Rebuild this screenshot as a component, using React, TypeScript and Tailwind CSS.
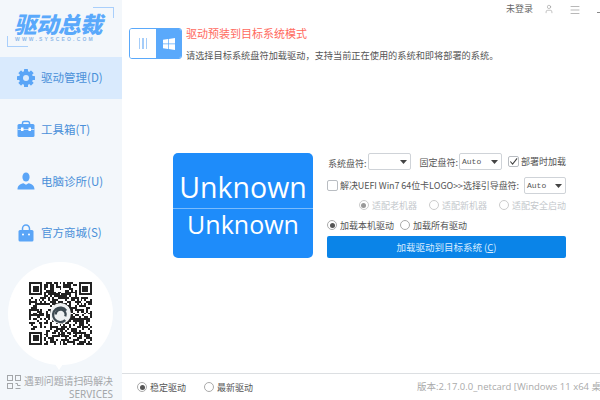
import { Menu, User } from "lucide-react";
import type { ReactNode } from "react";

const FONT = "font-['Noto_Sans_CJK_SC','Noto_Sans',sans-serif]";

const NAV_ITEMS = [
  { label: "驱动管理(D)", icon: "gear", active: true },
  { label: "工具箱(T)", icon: "case" },
  { label: "电脑诊所(U)", icon: "person" },
  { label: "官方商城(S)", icon: "bag" },
];

function NavIcon({ name }: { name: string }) {
  if (name === "gear") {
    return (
      <svg viewBox="0 0 18 18" className="h-[18px] w-[18px]">
        <circle cx="9" cy="9" r="5" fill="none" stroke="#5aa5f7" strokeWidth="4" />
        {[0, 45, 90, 135].map((deg) => (
          <rect key={deg} x="7" y="0" width="4" height="18" rx="0.6" fill="#5aa5f7" transform={`rotate(${deg} 9 9)`} />
        ))}
        <circle cx="9" cy="9" r="3" fill="#d9eafd" />
      </svg>
    );
  }
  if (name === "case") {
    return (
      <svg viewBox="0 0 18 18" className="h-[18px] w-[18px]">
        <path d="M5.5 5V3A1.5 1.5 0 0 1 7 1.5h4A1.5 1.5 0 0 1 12.5 3v2" fill="none" stroke="#5aa5f7" strokeWidth="1.5" />
        <rect x="0.5" y="4" width="17" height="13" rx="1.5" fill="#5aa5f7" />
        <rect x="0.5" y="9" width="17" height="1" fill="#c4def9" />
        <rect x="4" y="7.5" width="2.5" height="3.5" fill="#fff" />
        <rect x="11.5" y="7.5" width="2.5" height="3.5" fill="#fff" />
      </svg>
    );
  }
  if (name === "person") {
    return (
      <svg viewBox="0 0 18 18" className="h-[18px] w-[18px] fill-[#5aa5f7]">
        <ellipse cx="9" cy="5" rx="3.6" ry="4.6" />
        <path d="M0.5 17.5c0-4 2.5-5.5 6-6.3l2.5 1.6 2.5-1.6c3.5 0.8 6 2.3 6 6.3z" />
      </svg>
    );
  }
  return (
    <svg viewBox="0 0 18 18" className="h-[18px] w-[18px]">
      <path d="M5.5 7V4.5a3.5 3.5 0 0 1 7 0V7" fill="none" stroke="#5aa5f7" strokeWidth="1.5" />
      <rect x="1.5" y="6" width="15" height="11.5" rx="1.5" fill="#5aa5f7" />
      <circle cx="6" cy="10.5" r="1" fill="#fff" />
      <circle cx="12" cy="10.5" r="1" fill="#fff" />
    </svg>
  );
}

function QrCode() {
  const size = 33;
  const cells: ReactNode[] = [];
  const inFinder = (x: number, y: number) =>
    (x < 8 && y < 8) || (x > size - 9 && y < 8) || (x < 8 && y > size - 9);
  for (let y = 0; y < size; y++) {
    for (let x = 0; x < size; x++) {
      if (inFinder(x, y)) continue;
      const hash = Math.sin(x * 12.9898 + y * 78.233) * 43758.5453;
      if (hash - Math.floor(hash) > 0.48) {
        cells.push(<rect key={`${x}-${y}`} x={x} y={y} width="1" height="1" fill="#222" />);
      }
    }
  }
  const finder = (x: number, y: number) => (
    <g key={`f${x}-${y}`}>
      <rect x={x + 0.5} y={y + 0.5} width="6" height="6" fill="none" stroke="#222" />
      <rect x={x + 2} y={y + 2} width="3" height="3" fill="#222" />
    </g>
  );
  return (
    <svg viewBox="0 0 33 33" className="h-[63px] w-[63px]" shapeRendering="crispEdges">
      {cells}
      {finder(0, 0)}
      {finder(26, 0)}
      {finder(0, 26)}
      <g shapeRendering="auto">
        <circle cx="16.5" cy="16.5" r="5.5" fill="#eef1f2" />
        <path d="M14 17a2.6 2.6 0 1 1 5 1M19.5 15a3.8 3.8 0 1 0 -0.5 5" fill="none" stroke="#3d4a52" strokeWidth="1.2" />
      </g>
    </svg>
  );
}

function Radio({ checked, muted, label }: { checked?: boolean; muted?: boolean; label: string }) {
  return (
    <span className={`flex items-center gap-[3px] text-[9px] leading-none ${muted ? "text-[#c4c8cc]" : "text-[#555]"}`}>
      <span className={`flex h-[10px] w-[10px] items-center justify-center rounded-full border bg-white ${muted ? "border-[#ccc]" : "border-[#aaa]"}`}>
        {checked && <span className={`h-[5px] w-[5px] rounded-full ${muted ? "bg-[#999]" : "bg-[#555]"}`} />}
      </span>
      {label}
    </span>
  );
}

function Select({ value, className }: { value?: string; className: string }) {
  return (
    <span className={`flex items-center justify-between rounded-[2px] border border-[#cfd3d8] bg-white pl-[2px] pr-[3px] font-['Liberation_Mono',monospace] text-[8px] text-[#555] ${className}`}>
      {value}
      <svg viewBox="0 0 7 4" className="ml-auto h-[4px] w-[7px] fill-[#444]">
        <path d="M0 0h7L3.5 4z" />
      </svg>
    </span>
  );
}

function Checkbox({ checked }: { checked?: boolean }) {
  return (
    <span className="flex h-[11px] w-[11px] shrink-0 items-center justify-center rounded-[2px] border border-[#b9bdc2] bg-white">
      {checked && (
        <svg viewBox="0 0 10 10" className="h-[9px] w-[9px]">
          <path d="M1.5 5l2.5 3 5-6.5" fill="none" stroke="#444" strokeWidth="1.2" />
        </svg>
      )}
    </span>
  );
}

function Sidebar() {
  return (
    <aside className="relative flex h-[400px] w-[122px] shrink-0 flex-col bg-[#f3f7fb]">
      <div className="relative h-[57px]">
        <span className="absolute left-[93px] top-[7px] h-[11px] w-[21px] border-r border-t border-[#a9cffb]" />
        <span className="absolute left-[7px] top-[36px] h-[11px] w-[21px] border-b border-l border-[#a9cffb]" />
        <div className="absolute left-[14px] top-[11px] text-[22.5px] font-black italic leading-[24px] tracking-[-0.5px] text-[#5aa9fb] whitespace-nowrap">
          驱动总裁
        </div>
        <div className="absolute left-[15px] top-[36px] font-['Liberation_Sans',sans-serif] text-[5px] font-bold leading-[6px] tracking-[2.2px] text-[#8fb9e8] whitespace-nowrap">
          WWW.SYSCEO.COM
        </div>
      </div>
      <nav className="flex flex-col">
        {NAV_ITEMS.map((item) => (
          <div
            key={item.label}
            className={`mb-[10px] flex h-[41.67px] items-center gap-[6px] pl-[17px] text-[11.5px] text-[#4a90d9] ${item.active ? "bg-[#d9eafd]" : ""}`}
          >
            <NavIcon name={item.icon} />
            <span className="whitespace-nowrap">{item.label}</span>
          </div>
        ))}
      </nav>
      <div className="absolute left-[8px] top-[262px] flex h-[103px] w-[105px] items-center justify-center rounded-full bg-white">
        <QrCode />
        <span className="absolute left-[45px] top-[99px] h-0 w-0 border-x-[6px] border-t-[9px] border-x-transparent border-t-white" />
      </div>
      <div className="absolute left-[7px] top-[374px] flex items-start gap-[3px] text-[#a3a6a9]">
        <svg viewBox="0 0 14 14" className="mt-[1px] h-[14px] w-[14px] fill-none stroke-[#a3a6a9]">
          <rect x="0.5" y="0.5" width="5" height="5" />
          <rect x="8.5" y="0.5" width="5" height="5" />
          <rect x="0.5" y="8.5" width="5" height="5" />
          <path d="M8.5 8.5h2v2h3M8.5 13.5h5" />
        </svg>
        <div className="flex w-[89px] flex-col items-end text-[9.9px] leading-[14px]">
          <span className="whitespace-nowrap">遇到问题请扫码解决</span>
          <span className="font-['Noto_Sans',sans-serif] text-[10px] leading-[12px]">SERVICES</span>
        </div>
      </div>
    </aside>
  );
}

export default function App() {
  return (
    <div className={`flex h-[400px] w-[600px] overflow-hidden bg-white ${FONT}`}>
      <Sidebar />
      <main className="flex min-w-0 flex-1 flex-col">
        <header className="flex h-[28px] items-start justify-end pt-[3px] text-[9px] leading-[12px] text-[#666]">
          <span>未登录</span>
          <User className="ml-[11px] mt-[1px] h-[10px] w-[10px] text-[#888]" strokeWidth={1.2} />
          <Menu className="ml-[15px] mt-[1px] h-[12px] w-[12px] text-[#888]" strokeWidth={1.2} />
          <span className="ml-[16px] mt-[9px] h-px w-[3px] bg-[#888]" />
        </header>

        <section className="flex items-start pl-[7px]">
          <div className="flex h-[31px] w-[53px] shrink-0 overflow-hidden rounded-[3px] border border-[#5aa9fb]">
            <div className="flex w-[26px] items-center justify-center gap-[2px] bg-white">
              <span className="h-[11px] w-[1.5px] bg-[#a5cdf9]" />
              <span className="h-[11px] w-[1.5px] bg-[#a5cdf9]" />
              <span className="h-[11px] w-[1.5px] bg-[#a5cdf9]" />
            </div>
            <div className="flex flex-1 items-center justify-center bg-[#5aa9fb]">
              <svg viewBox="0 0 12 12" className="h-[12px] w-[12px] fill-white">
                <path d="M0 1.8 5 1v4.5H0zM5.7 0.9 12 0v5.5H5.7zM0 6.3h5v4.6L0 10.2zM5.7 6.3H12V12l-6.3-0.9z" />
              </svg>
            </div>
          </div>
          <div className="ml-[4px] whitespace-nowrap">
            <div className="text-[11px] leading-[10px] text-[#ff6a5e]">驱动预装到目标系统模式</div>
            <div className="mt-[11px] text-[9.2px] leading-[13px] text-[#555]">
              请选择目标系统盘符加载驱动{"\uFF0C"}支持当前正在使用的系统和即将部署的系统。
            </div>
          </div>
        </section>

        <section className="flex flex-1 items-start pl-[51px] pt-[91px]">
          <div className="flex h-[105px] w-[140px] shrink-0 flex-col items-center rounded-[5px] bg-[#1e8cfa] font-['Open_Sans',sans-serif] text-white">
            <div className="flex h-[56px] w-full items-end justify-center border-b border-[#7bbcfc] pb-[3px] text-[28.5px] leading-[36px]">
              Unknown
            </div>
            <div className="mt-[-1px] text-[25px] leading-[32px]">Unknown</div>
          </div>

          <div className="ml-[14px] flex w-[239px] flex-col text-[9px] text-[#555]">
            <div className="flex h-[17px] items-center whitespace-nowrap">
              <span className="ml-[1px] mt-[5px]">系统盘符:</span>
              <Select className="ml-[1px] h-[17px] w-[45px]" />
              <span className="ml-[8px] mt-[3px]">固定盘符:</span>
              <Select value="Auto" className="ml-[1px] h-[17px] w-[44px]" />
              <span className="ml-[6px] flex items-center gap-[2px]">
                <Checkbox checked />
                部署时加载
              </span>
            </div>
            <div className="mt-[7px] flex h-[17px] items-center whitespace-nowrap">
              <Checkbox />
              <span className="ml-[2px] mt-[1px] tracking-[-0.08px]">解决UEFI Win7 64位卡LOGO{">>"}选择引导盘符:</span>
              <Select value="Auto" className="ml-auto h-[17px] w-[42px]" />
            </div>
            <div className="mt-[5px] flex h-[12px] items-center justify-end gap-[12px] whitespace-nowrap">
              <Radio checked muted label="适配老机器" />
              <Radio muted label="适配新机器" />
              <Radio muted label="适配安全启动" />
            </div>
            <div className="mt-[8px] flex h-[12px] items-center gap-[6px] whitespace-nowrap">
              <Radio checked label="加载本机驱动" />
              <Radio label="加载所有驱动" />
            </div>
            <div className="mt-[5px] flex h-[22px] items-center justify-center rounded-[2px] bg-[#0a84e8] text-[9.5px] text-[#d8ecff]">
              加载驱动到目标系统 (<span className="underline">C</span>)
            </div>
          </div>
        </section>

        <footer className="flex h-[27px] items-center border-t border-[#dcdfe2] pl-[15px] whitespace-nowrap">
          <Radio checked label="稳定驱动" />
          <span className="ml-[18px]">
            <Radio label="最新驱动" />
          </span>
          <span className="ml-[164px] font-['Open_Sans','Noto_Sans_CJK_SC',sans-serif] text-[9.5px] text-[#aaa]">
            版本:2.17.0.0_netcard [Windows 11 x64 桌
          </span>
        </footer>
      </main>
    </div>
  );
}
